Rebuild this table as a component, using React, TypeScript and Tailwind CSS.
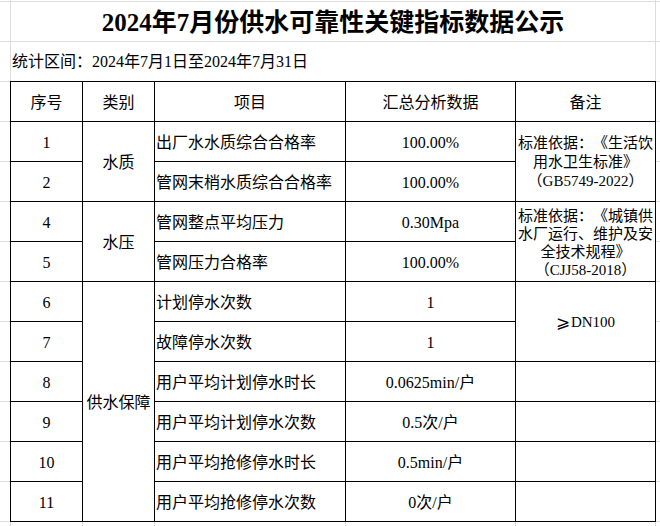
import React from 'react';

const rows = [
  { no: '1', item: '出厂水水质综合合格率', value: '100.00%' },
  { no: '2', item: '管网末梢水质综合合格率', value: '100.00%' },
  { no: '4', item: '管网整点平均压力', value: '0.30Mpa' },
  { no: '5', item: '管网压力合格率', value: '100.00%' },
  { no: '6', item: '计划停水次数', value: '1' },
  { no: '7', item: '故障停水次数', value: '1' },
  { no: '8', item: '用户平均计划停水时长', value: '0.0625min/户' },
  { no: '9', item: '用户平均计划停水次数', value: '0.5次/户' },
  { no: '10', item: '用户平均抢修停水时长', value: '0.5min/户' },
  { no: '11', item: '用户平均抢修停水次数', value: '0次/户' },
];

// grid rows: header is row 1, data starts at row 2
const rowStart = [
  'row-start-2', 'row-start-3', 'row-start-4', 'row-start-5', 'row-start-6',
  'row-start-7', 'row-start-8', 'row-start-9', 'row-start-10', 'row-start-11',
];

const cell = 'border-r border-b border-black flex items-center pt-[2px]';
const grid = 'grid grid-cols-[72px_72px_191px_170px_140px]';
const gridLine = 'border-[#dcdcdc]';

const SideColumn = ({ className = '' }: { className?: string }) => (
  <div className={`flex flex-col ${className}`}>
    <div className={`h-[2px] border-b ${gridLine}`} />
    <div className={`h-[40px] border-b ${gridLine}`} />
    <div className={`h-[40px] border-b ${gridLine}`} />
    {Array.from({ length: 11 }).map((_, i) => (
      <div key={i} className={`h-[40px] border-b ${gridLine}`} />
    ))}
  </div>
);

const App = () => {
  return (
    <div className="w-[660px] h-[526px] overflow-hidden bg-white text-black flex [text-spacing-trim:space-all] font-['Liberation_Serif','Noto_Sans_CJK_SC',serif]">
      <SideColumn className="w-[10px] shrink-0" />

      <div className="w-[646px] shrink-0 flex flex-col">
        <div className={`h-[2px] border-b border-x ${gridLine}`} />
        <div className={`h-[40px] border-b border-x ${gridLine} flex items-center justify-center pt-[2px]`}>
          <h1 className="text-[25px] font-bold leading-none">2024年7月份供水可靠性关键指标数据公示</h1>
        </div>
        <div className={`h-[39px] border-x ${gridLine} flex items-center pl-[1px] pt-[1px] text-[16px]`}>
          统计区间：2024年7月1日至2024年7月31日
        </div>

        <div className={`${grid} grid-rows-[repeat(11,40px)] border-t border-l border-black text-[16px]`}>
          <div className={`${cell} justify-center col-start-1 row-start-1`}>序号</div>
          <div className={`${cell} justify-center col-start-2 row-start-1`}>类别</div>
          <div className={`${cell} justify-center col-start-3 row-start-1`}>项目</div>
          <div className={`${cell} justify-center col-start-4 row-start-1`}>汇总分析数据</div>
          <div className={`${cell} justify-center col-start-5 row-start-1`}>备注</div>

          {rows.map((r, i) => (
            <React.Fragment key={r.no}>
              <div className={`${cell} justify-center col-start-1 ${rowStart[i]}`}>{r.no}</div>
              <div className={`${cell} pl-[1px] whitespace-nowrap col-start-3 ${rowStart[i]}`}>{r.item}</div>
              <div className={`${cell} justify-center col-start-4 ${rowStart[i]}`}>{r.value}</div>
            </React.Fragment>
          ))}

          <div className={`${cell} justify-center col-start-2 row-start-2 row-span-2`}>水质</div>
          <div className={`${cell} justify-center col-start-2 row-start-4 row-span-2`}>水压</div>
          <div className={`${cell} justify-center col-start-2 row-start-6 row-span-6`}>供水保障</div>

          <div className={`${cell} justify-center col-start-5 row-start-2 row-span-2 flex-col text-[15px] leading-[19px] text-center whitespace-nowrap`}>
            <span>标准依据：《生活饮</span>
            <span>用水卫生标准》</span>
            <span>（GB5749-2022）</span>
          </div>
          <div className={`${cell} justify-center col-start-5 row-start-4 row-span-2 flex-col text-[15px] leading-[18px] text-center whitespace-nowrap`}>
            <span>标准依据：《城镇供</span>
            <span>水厂运行、维护及安</span>
            <span>全技术规程》</span>
            <span>（CJJ58-2018）</span>
          </div>
          <div className={`${cell} justify-center col-start-5 row-start-6 row-span-2 text-[15px]`}>
            <span className="font-['DejaVu_Sans',sans-serif] text-[17px] font-light mr-[1px]">⩾</span>
            <span>DN100</span>
          </div>
          <div className={`${cell} col-start-5 row-start-8`} />
          <div className={`${cell} col-start-5 row-start-9`} />
          <div className={`${cell} col-start-5 row-start-10`} />
          <div className={`${cell} col-start-5 row-start-11`} />
        </div>

        <div className={`${grid} flex-1 border-l ${gridLine}`}>
          <div className={`border-r ${gridLine}`} />
          <div className={`border-r ${gridLine}`} />
          <div className={`border-r ${gridLine}`} />
          <div className={`border-r ${gridLine}`} />
          <div className={`border-r ${gridLine}`} />
        </div>
      </div>

      <SideColumn className="flex-1" />
    </div>
  );
};

export default App;
